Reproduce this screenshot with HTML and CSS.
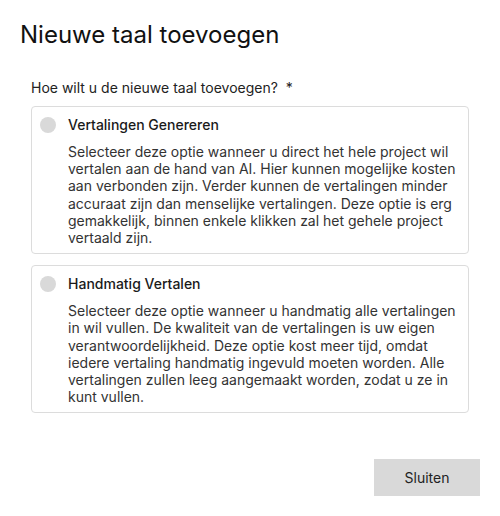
FILE: index.html
```html
<!DOCTYPE html>
<html lang="nl">
<head>
<meta charset="utf-8">
<title>Nieuwe taal toevoegen</title>
<link rel="stylesheet" href="styles.css">
</head>
<body>
<div class="dialog">
  <h1 class="title">Nieuwe taal toevoegen</h1>
  <div class="form">
    <div class="label">Hoe wilt u de nieuwe taal toevoegen? <span class="req">*</span></div>
    <div class="options">
      <label class="card">
        <span class="radio"></span>
        <span class="card-body">
          <span class="card-title">Vertalingen Genereren</span>
          <span class="card-desc">Selecteer deze optie wanneer u direct het hele project wil vertalen aan de hand van AI. Hier kunnen mogelijke kosten aan verbonden zijn. Verder kunnen de vertalingen minder accuraat zijn dan menselijke vertalingen. Deze optie is erg gemakkelijk, binnen enkele klikken zal het gehele project vertaald zijn.</span>
        </span>
      </label>
      <label class="card">
        <span class="radio"></span>
        <span class="card-body">
          <span class="card-title">Handmatig Vertalen</span>
          <span class="card-desc">Selecteer deze optie wanneer u handmatig alle vertalingen in wil vullen. De kwaliteit van de vertalingen is uw eigen verantwoordelijkheid. Deze optie kost meer tijd, omdat iedere vertaling handmatig ingevuld moeten worden. Alle vertalingen zullen leeg aangemaakt worden, zodat u ze in kunt vullen.</span>
        </span>
      </label>
    </div>
  </div>
  <div class="footer">
    <button class="btn">Sluiten</button>
  </div>
</div>
</body>
</html>
```

FILE: styles.css
```css
* { box-sizing: border-box; }
body {
  margin: 0;
  font-family: Inter, "Noto Sans", sans-serif;
  color: #1f1f1f;
  background: #fff;
}
.dialog {
  padding: 20px 20px 20px 20px;
}
.title {
  margin: 0;
  font-size: 24px;
  font-weight: 400;
  line-height: 30px;
  color: #111;
}
.form {
  padding: 29px 11px 0 11px;
}
.label {
  font-size: 14px;
  line-height: 18px;
  color: #222;
}
.req { margin-left: 4px; }
.options {
  display: flex;
  flex-direction: column;
  gap: 11px;
  margin-top: 9px;
}
.card {
  display: flex;
  align-items: flex-start;
  gap: 12px;
  border: 1px solid #dcdcdc;
  border-radius: 4px;
  padding: 9px 12px 7px 8px;
}
.radio {
  flex: none;
  width: 16px;
  height: 16px;
  border-radius: 50%;
  background: #d9d9d9;
  margin-top: 1px;
}
.card-body {
  display: flex;
  flex-direction: column;
  gap: 9px;
}
.card-title {
  font-size: 14px;
  font-weight: 500;
  line-height: 18px;
  color: #1a1a1a;
}
.card-desc {
  font-size: 14px;
  line-height: 17.2px;
  color: #333;
}
.footer {
  display: flex;
  justify-content: flex-end;
  margin-top: 46px;
}
.btn {
  width: 106px;
  height: 37px;
  border: none;
  border-radius: 0;
  background: #d9d9d9;
  font-family: Inter, "Noto Sans", sans-serif;
  font-size: 14px;
  color: #222;
}
```
